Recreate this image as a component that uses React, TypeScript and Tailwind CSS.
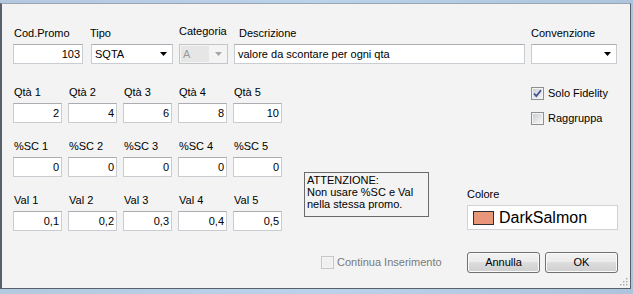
import clsx from 'clsx';
import type { ReactNode } from 'react';

function TextBox({ className, children, right }: { className?: string; children?: ReactNode; right?: boolean }) {
  return (
    <div
      className={clsx(
        'flex h-[20px] items-center border border-[#c9ccd0] border-t-[#abadb3] bg-white px-[2px] text-[11px] leading-[13px] text-black',
        right && 'justify-end',
        className
      )}
    >
      {children}
    </div>
  );
}

function Arrow({ color = '#000' }: { color?: string }) {
  return (
    <svg width="7" height="4" viewBox="0 0 7 4" className="shrink-0">
      <path d="M0 0h7L3.5 4z" fill={color} />
    </svg>
  );
}

function Combo({ className, value }: { className?: string; value?: string }) {
  return (
    <TextBox className={clsx('justify-between pl-[3px] pr-[5px]', className)}>
      <span>{value}</span>
      <Arrow />
    </TextBox>
  );
}

function Check({ checked, disabled }: { checked?: boolean; disabled?: boolean }) {
  return (
    <div
      className={clsx(
        'flex h-[13px] w-[13px] shrink-0 items-center justify-center border',
        disabled ? 'border-[#c6c6c6] bg-[#f4f4f4]' : 'border-[#8e8f8f] bg-[#f4f4f4]'
      )}
    >
      <div
        className={clsx(
          'flex h-[9px] w-[9px] items-center justify-center',
          disabled ? 'bg-[#f0f0f0]' : 'bg-[linear-gradient(135deg,#cbcfd5,#f6f6f6)]'
        )}
      >
        {checked && (
          <svg width="9" height="9" viewBox="0 0 9 9">
            <path d="M1 4.5l2.3 2.6L8 1.2" fill="none" stroke="#3d5590" strokeWidth="1.8" />
          </svg>
        )}
      </div>
    </div>
  );
}

function Field({ label, children, labelClass }: { label: string; children: ReactNode; labelClass?: string }) {
  return (
    <div className="flex flex-col">
      <span className={clsx('mb-[4px] pl-[1px] text-[11px] leading-[13px] text-black', labelClass)}>{label}</span>
      {children}
    </div>
  );
}

function Button({ children }: { children: ReactNode }) {
  return (
    <div className="flex h-[21px] w-[73px] items-center justify-center rounded-[3px] border border-[#707070] bg-[linear-gradient(#f2f2f2,#ebebeb_50%,#dddddd_50%,#cfcfcf)] text-[11px] leading-[13px] text-black shadow-[inset_0_0_0_1px_#fbfbfb]">
      {children}
    </div>
  );
}

const qta = ['2', '4', '6', '8', '10'];
const sc = ['0', '0', '0', '0', '0'];
const val = ['0,1', '0,2', '0,3', '0,4', '0,5'];

function NumRow({ prefix, values }: { prefix: string; values: string[] }) {
  return (
    <div className="flex gap-[6px]">
      {values.map((v, i) => (
        <Field key={i} label={`${prefix} ${i + 1}`}>
          <TextBox right className="w-[49px]">
            {v}
          </TextBox>
        </Field>
      ))}
    </div>
  );
}

export default function App() {
  return (
    <div className="h-[294px] w-[633px] bg-[linear-gradient(90deg,#b4c9e0,#bcd2ea_50%,#aec4dc)] pb-[5px] pr-[2px] pt-[3px] [font-family:'Liberation_Sans',Arial,sans-serif]">
      <div className="relative flex h-[286px] flex-col border-b border-l-2 border-r border-t border-b-[#57606b] border-l-[#57606b] border-r-[#57606b] border-t-[#9aa5b2] bg-[#f3f3f3] pl-[11px] pr-[12px] pt-[21px]">
        {/* testata */}
        <div className="flex items-end">
          <Field label="Cod.Promo">
            <TextBox right className="w-[70px]">
              103
            </TextBox>
          </Field>
          <div className="ml-[8px]">
            <Field label="Tipo" labelClass="-ml-[2px]">
              <Combo className="w-[82px]" value="SQTA" />
            </Field>
          </div>
          <div className="ml-[6px]">
            <Field label="Categoria" labelClass="mb-[6px] -ml-[1px]">
              <div className="flex h-[20px] w-[49px] items-center justify-between border border-[#c2c5c9] bg-[#f4f4f4] pl-[1px] pr-[5px]">
                <span className="flex h-[16px] w-[28px] items-center bg-[#e6e6e6] pl-[2px] text-[11px] leading-[13px] text-[#9a9a9a]">
                  A
                </span>
                <Arrow color="#a6a6a6" />
              </div>
            </Field>
          </div>
          <div className="ml-[6px]">
            <Field label="Descrizione" labelClass="mb-[2px] pl-[5px]">
              <TextBox className="w-[291px] pl-[3px]">valore da scontare per ogni qta</TextBox>
            </Field>
          </div>
          <div className="ml-[6px]">
            <Field label="Convenzione" labelClass="mb-[3px] -ml-[1px]">
              <Combo className="w-[86px]" />
            </Field>
          </div>
        </div>

        {/* corpo */}
        <div className="mt-[22px] flex items-start">
          <div className="flex w-[270px] flex-col gap-[17px]">
            <NumRow prefix="Qtà" values={qta} />
            <NumRow prefix="%SC" values={sc} />
            <NumRow prefix="Val" values={val} />
          </div>

          <div className="ml-[21px] mt-[86px] h-[45px] w-[125px] border border-[#6b6b6b] pl-[2px] pt-[1px] text-[11px] leading-[12px] text-black">
            <div>ATTENZIONE:</div>
            <div>Non usare %SC e Val</div>
            <div>nella stessa promo.</div>
          </div>

          <div className="ml-[38px] flex w-[151px] flex-col">
            <div className="ml-[64px] flex flex-col gap-[12px] pt-[1px]">
              <label className="flex h-[13px] items-center gap-[4px] text-[11px] leading-[13px] text-black">
                <Check checked />
                Solo Fidelity
              </label>
              <label className="flex h-[13px] items-center gap-[4px] text-[11px] leading-[13px] text-black">
                <Check />
                Raggruppa
              </label>
            </div>
            <span className="mt-[63px] text-[11px] leading-[13px] text-black">Colore</span>
            <div className="mt-[4px] flex h-[25px] w-[151px] items-center gap-[5px] border border-[#cfd2d6] bg-white pl-[5px]">
              <div className="h-[14px] w-[21px] border border-[#2e2e36] bg-[#e9967a]" />
              <span className="text-[16px] leading-[18px] text-black">DarkSalmon</span>
            </div>
          </div>
        </div>

        {/* pulsanti */}
        <div className="mt-[21px] flex items-center">
          <div className="ml-[308px] flex items-center gap-[3px] text-[11px] leading-[13px] text-[#7a7a7a]">
            <Check disabled />
            Continua Inserimento
          </div>
          <div className="ml-auto flex gap-[5px]">
            <Button>Annulla</Button>
            <Button>OK</Button>
          </div>
        </div>

        <svg width="9" height="9" viewBox="0 0 9 9" className="absolute bottom-[2px] right-[2px]">
          {[
            [7, 1],
            [4, 4],
            [7, 4],
            [1, 7],
            [4, 7],
            [7, 7],
          ].map(([x, y], i) => (
            <g key={i}>
              <rect x={x + 1} y={y + 1} width="1" height="1" fill="#ffffff" />
              <rect x={x} y={y} width="1.5" height="1.5" fill="#a9adb2" />
            </g>
          ))}
        </svg>
      </div>
    </div>
  );
}
